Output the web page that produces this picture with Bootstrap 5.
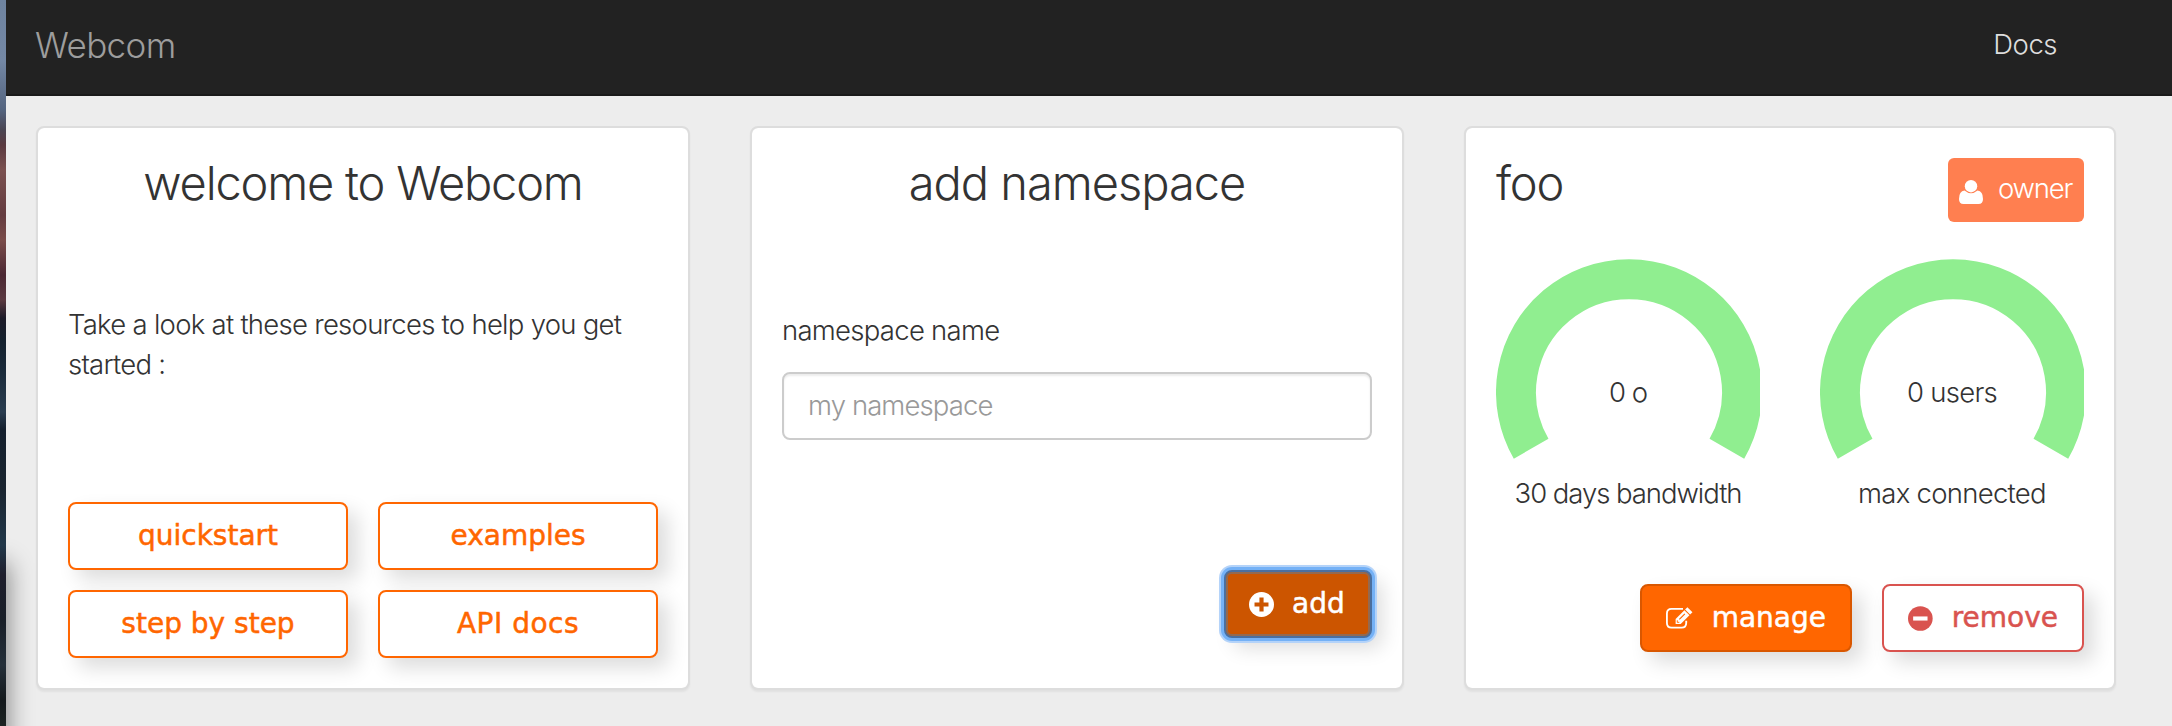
<!DOCTYPE html>
<html lang="en">
<head>
<meta charset="utf-8">
<title>Webcom</title>
<link href="https://cdn.jsdelivr.net/npm/bootstrap@5.3.0/dist/css/bootstrap.min.css" rel="stylesheet">
<script src="https://cdn.jsdelivr.net/npm/bootstrap@5.3.0/dist/js/bootstrap.bundle.min.js"></script>
<style>
html,body{height:726px;overflow:hidden}
body{background:#ededed;color:#333;font:300 27.5px/40px Inter,"Liberation Sans",sans-serif;letter-spacing:-.73px}
.desktop-edge{width:6px;background:linear-gradient(#6f84a0 0,#7488a5 60px,#54647f 110px,#4a4552 130px,#5a3a40 145px,#7b5150 170px,#643c40 215px,#7a4c4a 240px,#4b2833 275px,#5a3940 300px,#1c1b28 318px,#14202d 340px,#1a2a3a 370px,#2a3d50 412px,#141f2d 430px,#1a2530 490px,#22384a 545px,#1e1e2c 575px,#191f28 620px,#25303a 665px,#14191c 700px,#1c2322 726px)}
.page-main{min-width:0;position:relative}
.edge-shadow{position:absolute;left:0;top:530px;width:40px;height:196px;overflow:hidden}
.edge-shadow::before{content:"";position:absolute;left:-40px;top:36px;width:40px;height:220px;box-shadow:0 0 24px 3px rgba(0,0,0,.42)}
.topbar{height:96px;background:#222;border-bottom:2px solid #1a1a1a;padding:25px 115px 0 29px}
.brand-name{font-size:35px;letter-spacing:-.6px;color:#9d9d9d;text-decoration:none}
.docs-link{color:#ddd;letter-spacing:-.5px;text-decoration:none;margin-top:-1px}
.board{padding:30px 56px 0 30px;gap:60px}
.panel-box{width:654px;height:564px;background:#fff;background-clip:padding-box;border:2px solid #ddd;border-radius:8px;box-shadow:0 2px 2px rgba(0,0,0,.05);padding:30px}
.panel-box.last{width:652px}
.panel-box h2{font-size:47px;font-weight:300;line-height:50px;letter-spacing:-1.2px;margin:0 0 2px}
.panel-box h2.title-ns{letter-spacing:-1px}
.intro{margin-top:94px}
.ns-label{margin-top:100px}
.tx{display:inline-block;white-space:nowrap}
.btn{--bs-btn-border-radius:8px;height:68px;border-width:2px;padding:0 24px;font:400 28px/60px "DejaVu Sans",sans-serif;letter-spacing:0;box-shadow:10px 10px 20px #ddd;white-space:nowrap;-webkit-text-stroke:.5px currentColor}
.btn-line,.btn-line:hover{padding-top:2px;color:#f60;border-color:#f60;background:#fff}
.btn-fill,.btn-fill:hover{color:#fff;background:#f60;border-color:#d95700;width:212px}
.btn-del,.btn-del:hover{color:#d9534f;border-color:#d9534f;background:#fff;width:202px}
.btn-fill,.btn-del{gap:19px}
.btn-add,.btn-add:hover{color:#fff;background:#c50;border-color:#4b6f9e;box-shadow:inset 0 0 0 2px #94694f,0 0 0 3px #74b1f6,0 0 0 5px #b4d3f9,10px 10px 20px #ddd;width:148px;padding:0 0 0 23px;gap:18px;margin-bottom:20px}
.link-grid{display:grid;grid-template-columns:1fr 1fr;gap:20px 30px}
.form-control,.form-control:focus{height:68px;margin-top:22px;border:2px solid #ccc;border-radius:8px;padding:0 24px 3px;font:inherit;letter-spacing:-.9px;box-shadow:inset 0 2px 2px rgba(0,0,0,.075)}
.form-control::placeholder{color:#999;opacity:1}
.owner-tag{width:136px;height:64px;background:coral;color:#fff;border-radius:6px;letter-spacing:-1.2px}
.owner-tag svg{margin:22px 0 0 11px}
.owner-tag .tx{margin:10px 0 0 15px}
.gauges{margin-top:37px}
.gauge{width:264px}
.gauge svg{display:block}
.gauge-value{position:absolute;left:0;right:0;top:113px}
.gauge-name{margin-top:13px}
.actions{gap:30px;margin-bottom:6px}
</style>
</head>
<body class="d-flex">
<div class="desktop-edge flex-shrink-0"></div>
<div class="page-main flex-grow-1">
<nav class="topbar d-flex justify-content-between align-items-start">
<a class="brand-name tx" href="#">Webcom</a>
<a class="docs-link tx" href="#">Docs</a>
</nav>
<main class="board d-flex">
<section class="panel-box d-flex flex-column">
<h2 class="text-center">welcome to Webcom</h2>
<p class="intro mb-0">Take a look at these resources to help you get<br>started :</p>
<div class="link-grid mt-auto">
<a class="btn btn-line" href="#">quickstart</a>
<a class="btn btn-line" href="#">examples</a>
<a class="btn btn-line" href="#">step by step</a>
<a class="btn btn-line" href="#" style="letter-spacing:.5px">API docs</a>
</div>
</section>
<section class="panel-box d-flex flex-column">
<h2 class="title-ns text-center">add namespace</h2>
<label class="ns-label" for="ns">namespace name</label>
<input class="form-control" id="ns" placeholder="my namespace">
<button class="btn btn-add align-self-end mt-auto d-flex align-items-center">
<svg width="25" height="25" viewBox="0 0 24 24"><circle cx="12" cy="12" r="12" fill="#fff"/><path d="M5.300 12h13.400M12 5.300v13.400" stroke="#c50" stroke-width="4"/></svg>
<span class="tx">add</span></button>
</section>
<section class="panel-box last d-flex flex-column">
<div class="d-flex justify-content-between">
<h2>foo</h2>
<div class="owner-tag d-flex"><svg width="24" height="25" viewBox="0 0 24 25" fill="#fff"><circle cx="12" cy="6.200" r="6.200"/><path d="M5.500 10.500q6.500 5.500 13 0q5.500.5 5.500 8.500q0 5-4.500 5h-15Q0 24 0 19q0-8 5.500-8.500z"/></svg><span class="tx">owner</span></div>
</div>
<div class="gauges d-flex justify-content-between text-center">
<div class="gauge position-relative"><svg width="264" height="201"><path d="M35.140 189.750A113 113 0 1 1 230.860 189.750" fill="none" stroke="#90ee90" stroke-width="40"/></svg><div class="gauge-value" style="letter-spacing:-1px">0 o</div><div class="gauge-name" style="letter-spacing:-1.05px">30 days bandwidth</div></div>
<div class="gauge position-relative"><svg width="264" height="201"><path d="M35.140 189.750A113 113 0 1 1 230.860 189.750" fill="none" stroke="#90ee90" stroke-width="40"/></svg><div class="gauge-value">0 users</div><div class="gauge-name">max connected</div></div>
</div>
<div class="actions d-flex justify-content-end mt-auto">
<button class="btn btn-fill d-flex align-items-center"><svg width="29" height="24" viewBox="0 0 29 24" fill="none" stroke="#fff" stroke-width="2"><path d="M18.500 2H6Q1 2 1 7v10.500q0 5 5 5h11q5 0 5-5V15"/><path d="M10.500 18.500v-5.500L20 3.500l5.500 5.500-9.500 9.500z" fill="#fff" stroke="none"/><path d="M14.500 13.500l6-6" stroke="#f60" stroke-width="1.200"/><path d="M12.300 14.500v2.200h2.200" stroke="#f60" stroke-width="1"/><path d="M22 1.500l5.500 5.500" stroke-width="3.600"/></svg><span class="tx">manage</span></button>
<button class="btn btn-del d-flex align-items-center"><svg width="25" height="25" viewBox="0 0 24 24"><circle cx="12" cy="12" r="12" fill="#d9534f"/><path d="M5 12h14" stroke="#fff" stroke-width="4"/></svg><span class="tx">remove</span></button>
</div>
</section>
</main>
<div class="edge-shadow"></div>
</div>
</body>
</html>
